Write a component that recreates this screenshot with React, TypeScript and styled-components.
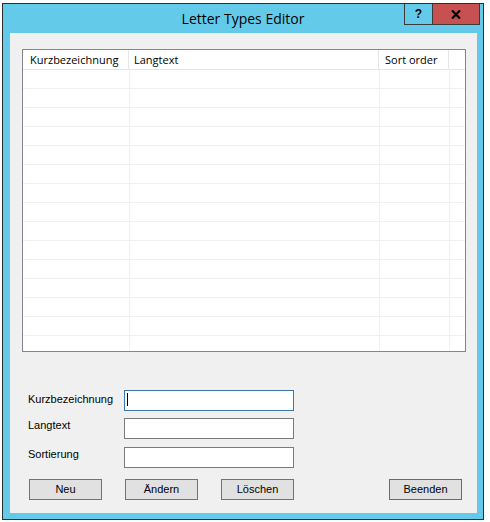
import React from "react";
import styled, { createGlobalStyle } from "styled-components";

const GlobalStyle = createGlobalStyle`
  html, body { margin: 0; padding: 0; background: #ffffff; }
  body { font-family: "Liberation Sans", Arial, sans-serif; }
  * { box-sizing: border-box; }
`;

const Window = styled.div`
  margin: 3px 0 0 2px;
  width: 482px;
  height: 517px;
  border: 1px solid #2e2e2e;
  background: #64caea;
  display: flex;
  flex-direction: column;
`;

const TitleBar = styled.div`
  height: 29px;
  flex: none;
  display: grid;
  grid-template-columns: 1fr auto 1fr;
  align-items: center;
`;

const Title = styled.div`
  grid-column: 2;
  font-family: "Open Sans", "Noto Sans", sans-serif;
  font-size: 14px;
  line-height: 18px;
  color: #000;
  padding-top: 1px;
`;

const Controls = styled.div`
  grid-column: 3;
  justify-self: end;
  align-self: start;
  margin-right: 3px;
  display: flex;
`;

const HelpButton = styled.div`
  width: 28px;
  height: 21px;
  border-left: 1px solid #3a3a3a;
  border-bottom: 1px solid #3a3a3a;
  display: flex;
  align-items: center;
  justify-content: center;
  font-family: "Liberation Sans", Arial, sans-serif;
  font-weight: bold;
  font-size: 12px;
  color: #000;
  padding-bottom: 1px;
`;

const CloseButton = styled.div`
  width: 48px;
  height: 21px;
  background: #c75050;
  border-left: 1px solid #3a3a3a;
  border-right: 1px solid #3a3a3a;
  border-bottom: 1px solid #3a3a3a;
  display: flex;
  align-items: center;
  justify-content: center;
`;

const Client = styled.div`
  flex: 1;
  margin: 0 6px 6px 7px;
  background: #f0f0f0;
  padding: 16px 11px 0 12px;
  display: flex;
  flex-direction: column;
`;

const ListView = styled.div`
  width: 444px;
  height: 303px;
  border: 1px solid #828790;
  background: #ffffff;
  overflow: hidden;
  display: flex;
  flex-direction: column;
`;

const HeaderRow = styled.div`
  display: flex;
  height: 20px;
  flex: none;
  border-bottom: 1px solid #e5e5e5;
`;

const HeaderCell = styled.div<{ $w?: number; $pad: number }>`
  ${(p) => (p.$w ? `width: ${p.$w}px; border-right: 1px solid #e5e5e5;` : "flex: 1;")}
  padding-left: ${(p) => p.$pad}px;
  font-family: "Open Sans", "Noto Sans", sans-serif;
  font-size: 11px;
  line-height: 19px;
  color: #000;
  white-space: nowrap;
`;

const BodyRow = styled.div`
  display: flex;
  height: 19px;
  flex: none;
  border-bottom: 1px solid #f0f0f0;
`;

const BodyCell = styled.div<{ $w?: number }>`
  ${(p) => (p.$w ? `width: ${p.$w}px; border-right: 1px solid #f0f0f0;` : "flex: 1;")}
`;

const Form = styled.div`
  margin-top: 38px;
  padding-left: 6px;
  display: grid;
  grid-template-columns: 96px 170px;
  grid-template-rows: 28px 29px 21px;
`;

const Label = styled.div<{ $offset: number }>`
  padding-top: ${(p) => p.$offset}px;
  font-size: 11px;
  line-height: 13px;
  color: #000;
`;

const Field = styled.div<{ $focused?: boolean }>`
  position: relative;
  width: 170px;
  height: 21px;
  background: #fff;
  border: 1px solid ${(p) => (p.$focused ? "#3a77aa" : "#7a7a7a")};
  ${(p) =>
    p.$focused
      ? `&::after {
    content: "";
    position: absolute;
    left: 2px;
    top: 2px;
    width: 1px;
    height: 13px;
    background: #000;
  }`
      : ""}
`;

const FieldInput = styled.input`
  display: block;
  width: 100%;
  height: 100%;
  border: none;
  outline: none;
  background: transparent;
  padding: 0 3px;
  font-family: "Liberation Sans", Arial, sans-serif;
  font-size: 11px;
`;

const ButtonRow = styled.div`
  margin-top: 11px;
  padding: 0 4px 0 7px;
  display: flex;
  gap: 23px;
`;

const Button = styled.div<{ $default?: boolean }>`
  width: 73px;
  height: 21px;
  background: #e1e1e1;
  border: 1px solid ${(p) => (p.$default ? "#3a77aa" : "#737373")};
  ${(p) => (p.$default ? "margin-left: auto;" : "")}
  display: flex;
  align-items: center;
  justify-content: center;
  font-size: 11px;
  line-height: 13px;
  color: #000;
`;

const headerCols = [
  { label: "Kurzbezeichnung", w: 106, pad: 7 },
  { label: "Langtext", w: 250, pad: 5 },
  { label: "Sort order", w: 70, pad: 6 },
];

const bodyCols = [107, 250, 70];

const fields = [
  { label: "Kurzbezeichnung", offset: 3, focused: true },
  { label: "Langtext", offset: 1 },
  { label: "Sortierung", offset: 1 },
];

export default function App() {
  const rows = Array.from({ length: 16 }, (_, i) => i);
  return (
    <>
      <GlobalStyle />
      <Window>
        <TitleBar>
          <Title>Letter Types Editor</Title>
          <Controls>
            <HelpButton>?</HelpButton>
            <CloseButton>
              <svg width="10" height="9" viewBox="0 0 10 9">
                <path d="M1 0.5 L9 8.5 M9 0.5 L1 8.5" stroke="#000" strokeWidth="2.3" fill="none" />
              </svg>
            </CloseButton>
          </Controls>
        </TitleBar>
        <Client>
          <ListView>
            <HeaderRow>
              {headerCols.map((c) => (
                <HeaderCell key={c.label} $w={c.w} $pad={c.pad}>
                  {c.label}
                </HeaderCell>
              ))}
              <HeaderCell $pad={0} />
            </HeaderRow>
            {rows.map((r) => (
              <BodyRow key={r}>
                {bodyCols.map((w, i) => (
                  <BodyCell key={i} $w={w} />
                ))}
                <BodyCell />
              </BodyRow>
            ))}
          </ListView>
          <Form>
            {fields.map((f) => (
              <React.Fragment key={f.label}>
                <Label $offset={f.offset}>{f.label}</Label>
                <Field $focused={f.focused}>
                  <FieldInput readOnly tabIndex={-1} />
                </Field>
              </React.Fragment>
            ))}
          </Form>
          <ButtonRow>
            <Button>Neu</Button>
            <Button>Ändern</Button>
            <Button>Löschen</Button>
            <Button $default>Beenden</Button>
          </ButtonRow>
        </Client>
      </Window>
    </>
  );
}
